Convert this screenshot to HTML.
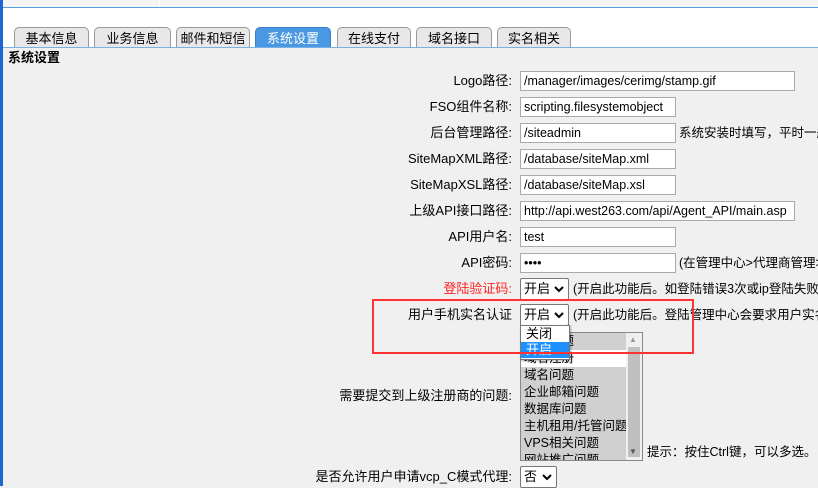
<!DOCTYPE html>
<html><head><meta charset="utf-8"><style>
body{margin:0;width:818px;height:486px;overflow:hidden;background:#f0f0f0;font-family:"Liberation Sans","Noto Sans CJK SC",sans-serif;font-size:13px;color:#000;position:relative}
.a{position:absolute;white-space:nowrap}
.lbl{position:absolute;right:306px;white-space:nowrap;line-height:20px}
.in{position:absolute;left:520px;height:18px;border:1px solid #aaa;background:#fff;line-height:18px;padding-left:3px;box-sizing:content-box;font-size:12.5px;overflow:hidden;white-space:nowrap}
.tab{position:absolute;top:27px;height:20px;border:1px solid #999;border-bottom:none;border-radius:5px 5px 0 0;background:#e8e8e8;text-align:center;line-height:21px;font-size:13px}
.sel{position:absolute;left:520px;height:20px;border:1px solid #777;border-radius:2px;background:#fff;line-height:20px;padding-left:3px}
.chev{position:absolute;right:4px;top:7px}
.note{position:absolute;left:573px;line-height:20px;white-space:nowrap}
</style></head><body>
<div class="a" style="left:0;top:0;width:3px;height:486px;background:#1e66d0"></div>
<div class="a" style="left:3px;top:0;width:815px;height:7px;background:#f4f4f4;border-bottom:1px solid #5a9de0"></div>
<div class="a" style="left:159px;top:0;width:1px;height:7px;background:#fff"></div>
<div class="a" style="left:3px;top:8px;width:815px;height:40px;background:#fff"></div>
<div class="tab" style="left:14px;width:73px">基本信息</div>
<div class="tab" style="left:94px;width:75px">业务信息</div>
<div class="tab" style="left:176px;width:72px">邮件和短信</div>
<div class="tab" style="left:255px;width:74px;background:#4a97e2;color:#fff;border-color:#3a7fd0">系统设置</div>
<div class="tab" style="left:337px;width:72px">在线支付</div>
<div class="tab" style="left:416px;width:74px">域名接口</div>
<div class="tab" style="left:497px;width:72px">实名相关</div>
<div class="a" style="left:3px;top:47px;width:815px;height:1px;background:#7ab0e8"></div>
<div class="a" style="left:8px;top:50px;font-weight:bold;font-size:13px;line-height:16px">系统设置</div>

<div class="lbl" style="top:71px">Logo路径:</div><div class="in" style="top:71px;width:270px">/manager/images/cerimg/stamp.gif</div>
<div class="lbl" style="top:97px">FSO组件名称:</div><div class="in" style="top:97px;width:151px">scripting.filesystemobject</div>
<div class="lbl" style="top:123px">后台管理路径:</div><div class="in" style="top:123px;width:151px">/siteadmin</div><div class="note" style="top:123px;left:679px;font-size:12.5px">系统安装时填写，平时一般</div>
<div class="lbl" style="top:149px">SiteMapXML路径:</div><div class="in" style="top:149px;width:151px">/database/siteMap.xml</div>
<div class="lbl" style="top:175px">SiteMapXSL路径:</div><div class="in" style="top:175px;width:151px">/database/siteMap.xsl</div>
<div class="lbl" style="top:201px">上级API接口路径:</div><div class="in" style="top:201px;width:270px">http://api.west263.com/api/Agent_API/main.asp</div>
<div class="lbl" style="top:227px">API用户名:</div><div class="in" style="top:227px;width:151px">test</div>
<div class="lbl" style="top:253px">API密码:</div><div class="in" style="top:253px;width:151px">••••</div><div class="note" style="top:253px;left:679px;font-size:12.5px">(在管理中心&gt;代理商管理&gt;</div>
<div class="lbl" style="top:279px;color:#f22">登陆验证码:</div><div class="sel" style="top:278px;width:44px">开启<svg class="chev" width="10" height="7" viewBox="0 0 10 7"><path d="M1 1L5 5L9 1" stroke="#000" stroke-width="2" fill="none"/></svg></div><div class="note" style="top:279px;font-size:12.5px">(开启此功能后。如登陆错误3次或ip登陆失败超</div>
<div class="lbl" style="top:305px">用户手机实名认证</div><div class="sel" style="top:304px;width:44px">开启<svg class="chev" width="10" height="7" viewBox="0 0 10 7"><path d="M1 1L5 5L9 1" stroke="#000" stroke-width="2" fill="none"/></svg></div><div class="note" style="top:305px;font-size:12.5px">(开启此功能后。登陆管理中心会要求用户实名</div>

<div class="a" style="left:520px;top:332px;width:121px;height:127px;border:1px solid #888;background:#fff;overflow:hidden;line-height:17px;font-size:12.5px">
<div style="background:#d0d0d0;padding-left:3px;width:102px">主机问题</div>
<div style="background:#fff;padding-left:3px;width:102px">域名注册</div>
<div style="background:#d0d0d0;padding-left:3px;width:102px">域名问题</div>
<div style="background:#d0d0d0;padding-left:3px;width:102px">企业邮箱问题</div>
<div style="background:#d0d0d0;padding-left:3px;width:102px">数据库问题</div>
<div style="background:#d0d0d0;padding-left:3px;width:102px">主机租用/托管问题</div>
<div style="background:#d0d0d0;padding-left:3px;width:102px">VPS相关问题</div>
<div style="background:#d0d0d0;padding-left:3px;width:102px">网站推广问题</div>
<div class="a" style="left:105px;top:0;width:16px;height:127px;background:#f0f0f0"></div>
<div class="a" style="left:107px;top:14px;width:12px;height:110px;background:#c0c0c0"></div>
<div class="a" style="left:108px;top:1px;font-size:8px;color:#999;line-height:12px">▲</div>
<div class="a" style="left:108px;top:113px;font-size:8px;color:#555;line-height:12px">▼</div>
</div>
<div class="a" style="left:520px;top:325px;width:48px;height:33px;border:1px solid #777;background:#fff;line-height:16px;box-shadow:1px 1px 2px rgba(0,0,0,.3)">
<div style="padding-left:5px">关闭</div><div style="padding-left:5px;background:#1e90ff;color:#fff">开启</div></div>
<div class="a" style="left:372px;top:299px;width:318px;height:51px;border:2px solid #f33"></div>

<div class="lbl" style="top:386px">需要提交到上级注册商的问题:</div>
<div class="note" style="top:442px;left:647px;font-size:12.5px">提示：按住Ctrl键，可以多选。</div>
<div class="lbl" style="top:467px">是否允许用户申请vcp_C模式代理:</div><div class="sel" style="top:466px;width:32px">否<svg class="chev" width="10" height="7" viewBox="0 0 10 7"><path d="M1 1L5 5L9 1" stroke="#000" stroke-width="2" fill="none"/></svg></div>
</body></html>
